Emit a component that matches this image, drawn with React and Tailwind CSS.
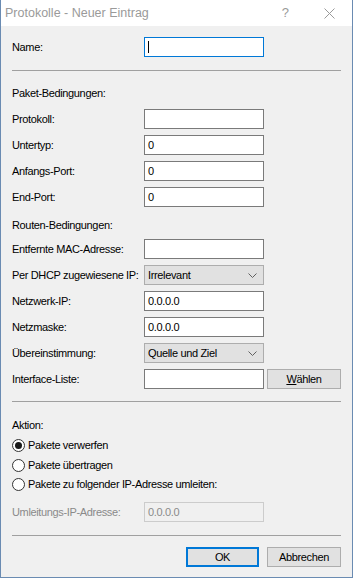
import React from "react";

const font = { fontFamily: '"Liberation Sans", Arial, sans-serif' };

function TextBox({ value = "", focused, disabled }) {
  return (
    <div
      className={
        "w-[120px] h-[20px] flex items-center px-[3px] text-[11px] border " +
        (disabled
          ? "bg-[#f0f0f0] border-[#cccccc] text-[#8a8a8a]"
          : focused
          ? "bg-white border-[#0078d7] text-black"
          : "bg-white border-[#7a7a7a] text-black")
      }
    >
      {focused && <span className="w-px h-[12px] bg-black" />}
      {value}
    </div>
  );
}

function Combo({ value }) {
  return (
    <div className="w-[120px] h-[20px] flex items-center justify-between pl-[3px] pr-[6px] text-[11px] bg-[#e1e1e1] border border-[#adadad] text-black">
      <span>{value}</span>
      <svg width="9" height="5" viewBox="0 0 9 5" className="shrink-0">
        <path d="M0.5 0.5 L4.5 4.5 L8.5 0.5" fill="none" stroke="#606060" strokeWidth="1" />
      </svg>
    </div>
  );
}

function Row({ label, children, disabled, className = "mt-[6px]" }) {
  return (
    <div className={"flex items-center h-[20px] " + className}>
      <div className={"w-[132px] shrink-0 whitespace-nowrap text-[11px] " + (disabled ? "text-[#8a8a8a]" : "text-black")}>
        {label}
      </div>
      {children}
    </div>
  );
}

function Radio({ label, checked, className = "" }) {
  return (
    <div className={"flex items-center h-[20px] " + className}>
      <div className="w-[13px] h-[13px] rounded-full border border-[#333333] bg-white flex items-center justify-center shrink-0">
        {checked && <div className="w-[7px] h-[7px] rounded-full bg-[#1a1a1a]" />}
      </div>
      <span className="ml-[3px] text-[11px] text-black">{label}</span>
    </div>
  );
}

const Sep = ({ className }) => <div className={"h-px bg-[#a0a0a0] " + className} />;

export default function App() {
  return (
    <div style={font} className="w-[353px] h-[578px] bg-white border border-t-0 border-[#6a8bb2] flex flex-col tracking-[-0.35px]">
      {/* Title bar */}
      <div className="h-[26px] flex items-center shrink-0 bg-white tracking-normal">
        <span className="ml-[4px] text-[12.5px] text-[#9a9a9a]">Protokolle - Neuer Eintrag</span>
        <span className="ml-auto mr-[35px] text-[13px] text-[#9a9a9a]">?</span>
        <svg width="11" height="11" viewBox="0 0 11 11" className="mr-[17px]">
          <path d="M0.5 0.5 L10.5 10.5 M10.5 0.5 L0.5 10.5" stroke="#9a9a9a" strokeWidth="1" />
        </svg>
      </div>

      {/* Body */}
      <div className="flex-1 bg-[#f0f0f0] px-[11px] flex flex-col">
        <Row label="Name:" className="mt-[11px]">
          <TextBox focused />
        </Row>
        <Sep className="mt-[13px]" />

        <div className="mt-[12px] h-[20px] flex items-center text-[11px] text-black">Paket-Bedingungen:</div>
        <Row label="Protokoll:"><TextBox /></Row>
        <Row label="Untertyp:"><TextBox value="0" /></Row>
        <Row label="Anfangs-Port:"><TextBox value="0" /></Row>
        <Row label="End-Port:"><TextBox value="0" /></Row>

        <div className="mt-[8px] h-[20px] flex items-center text-[11px] text-black">Routen-Bedingungen:</div>
        <Row label="Entfernte MAC-Adresse:" className="mt-[4px]"><TextBox /></Row>
        <Row label="Per DHCP zugewiesene IP:"><Combo value="Irrelevant" /></Row>
        <Row label="Netzwerk-IP:"><TextBox value="0.0.0.0" /></Row>
        <Row label="Netzmaske:"><TextBox value="0.0.0.0" /></Row>
        <Row label="Übereinstimmung:"><Combo value="Quelle und Ziel" /></Row>
        <Row label="Interface-Liste:">
          <TextBox />
          <button className="ml-[3px] w-[74px] h-[20px] bg-[#e1e1e1] border border-[#adadad] text-[11px] text-black flex items-center justify-center">
            <span><span className="underline">W</span>ählen</span>
          </button>
        </Row>

        <Sep className="mt-[12px]" />
        <div className="mt-[13px] h-[20px] flex items-center text-[11px] text-black">Aktion:</div>
        <Radio label="Pakete verwerfen" checked />
        <Radio label="Pakete übertragen" />
        <Radio label="Pakete zu folgender IP-Adresse umleiten:" className="-mt-px" />
        <Row label="Umleitungs-IP-Adresse:" disabled className="mt-[8px]">
          <TextBox value="0.0.0.0" disabled />
        </Row>

        <Sep className="mt-[13px]" />
        <div className="mt-[11px] flex justify-end gap-[8px]">
          <button className="w-[73px] h-[20px] bg-[#e1e1e1] border-2 border-[#0078d7] text-[11px] text-black">OK</button>
          <button className="w-[74px] h-[20px] bg-[#e1e1e1] border border-[#adadad] text-[11px] text-black">Abbrechen</button>
        </div>
      </div>
    </div>
  );
}
